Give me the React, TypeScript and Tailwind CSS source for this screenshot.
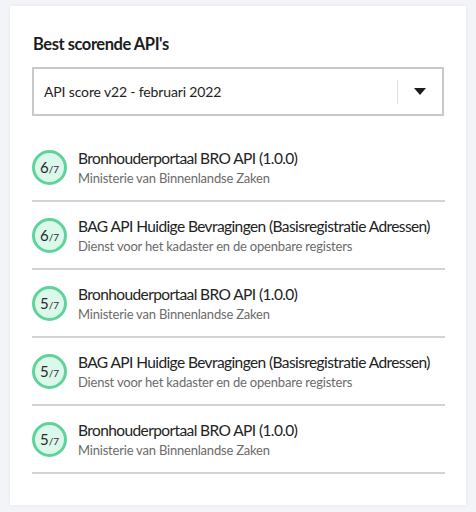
import React from "react";

const items = [
  { score: 6, title: "Bronhouderportaal BRO API (1.0.0)", org: "Ministerie van Binnenlandse Zaken" },
  { score: 6, title: "BAG API Huidige Bevragingen (Basisregistratie Adressen)", org: "Dienst voor het kadaster en de openbare registers" },
  { score: 5, title: "Bronhouderportaal BRO API (1.0.0)", org: "Ministerie van Binnenlandse Zaken" },
  { score: 5, title: "BAG API Huidige Bevragingen (Basisregistratie Adressen)", org: "Dienst voor het kadaster en de openbare registers" },
  { score: 5, title: "Bronhouderportaal BRO API (1.0.0)", org: "Ministerie van Binnenlandse Zaken" },
];

export default function App() {
  return (
    <div className="w-[476px] h-[512px] bg-[#f3f4f8] pt-[6px] pl-[10px] overflow-hidden" style={{ fontFamily: "Lato, 'Noto Sans', sans-serif" }}>
      <div className="w-[456px] h-[499px] bg-white shadow-[0_0_4px_rgba(0,0,0,0.06)] px-[22px] pt-[26px]">
        <h2 className="text-[16.5px] leading-[24px] font-bold text-[#1d1d1d] pl-[1px] tracking-[-0.45px]">Best scorende API's</h2>
        <div className="mt-[11px] h-[49px] border-2 border-[#c9c9c9] flex items-center">
          <span className="flex-1 pl-[10px] text-[14px] tracking-[-0.15px] text-[#222]">API score v22 - februari 2022</span>
          <div className="w-px h-[24px] bg-[#e2e2e2]" />
          <div className="w-[44px] flex items-center justify-center">
            <svg width="12" height="8" viewBox="0 0 12 8"><path d="M0 0 H12 L6 7 Z" fill="#1d1d1d" /></svg>
          </div>
        </div>
        <div className="mt-[18px] w-[413px]">
          {items.map((it, i) => (
            <div key={i} className="h-[68px] flex items-center border-b-2 border-[#d3d3d3] pt-[1px]">
              <div className="w-[35px] h-[35px] rounded-full border-[3px] border-[#5fd39c] bg-[#dcf8ea] flex items-center justify-center shrink-0 text-[#2a2a2a]">
                <span className="text-[15px] leading-none">{it.score}</span>
                <span className="text-[10px] leading-none mt-[3px]">/7</span>
              </div>
              <div className="ml-[11px] flex flex-col">
                <span className="text-[15.5px] leading-[22px] tracking-[-0.6px] text-[#222] whitespace-nowrap">{it.title}</span>
                <span className="text-[13px] leading-[19px] tracking-[-0.2px] text-[#6b6b6b] whitespace-nowrap">{it.org}</span>
              </div>
            </div>
          ))}
        </div>
      </div>
    </div>
  );
}
